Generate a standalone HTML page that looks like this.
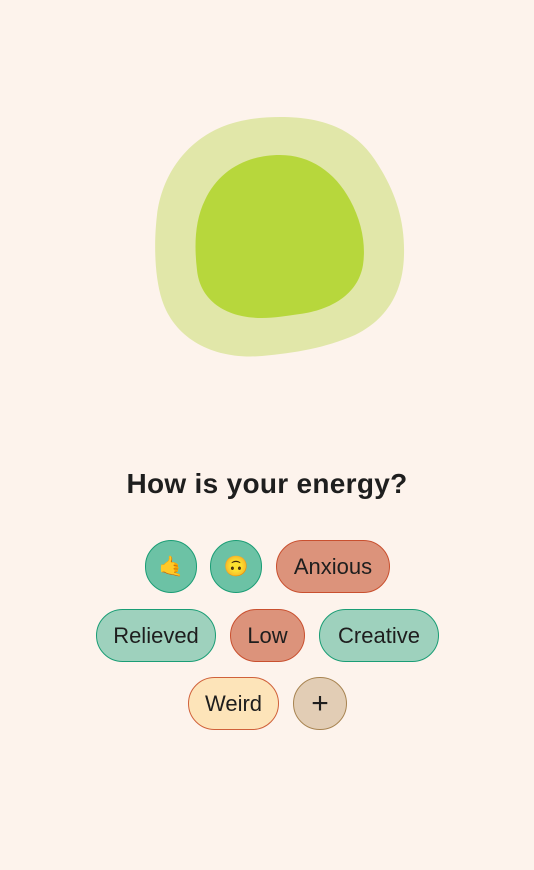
<!DOCTYPE html>
<html><head><meta charset="utf-8"><style>
html,body{margin:0;padding:0;background:#fdf3ec;}
body{width:534px;height:870px;position:relative;overflow:hidden;font-family:"Liberation Sans",sans-serif;}
svg{position:absolute;left:0;top:0}
h1{position:absolute;top:465px;left:0;width:534px;text-align:center;margin:0;font-size:28px;font-weight:bold;color:#1e1e1e;line-height:38px;letter-spacing:0.3px}
.c{position:absolute;box-sizing:border-box;height:53px;border-radius:27px;border:1.5px solid;display:flex;align-items:center;justify-content:center;font-size:22px;color:#1e1e1e}
.g{background:#6cc2a5;border-color:#1a9d75}
.lg{background:#9ed1bd;border-color:#1a9d75}
.r{background:#dc937b;border-color:#c9502f}
.y{background:#fde4b9;border-color:#d0613a}
.p{background:#e2cdb5;border-color:#a88451;font-size:30px}
</style></head><body>
<svg width="534" height="870">
<path fill="#e1e7a9" d="M280,117 C325,117 355,130 375,160 C395,190 405,220 404,255 C403,295 385,320 355,335 C325,348 295,353 262,356 C215,360 175,340 162,300 C154,275 154,240 157,215 C162,175 185,145 215,130 C235,120 258,117 280,117Z"/>
<path fill="#b7d73c" d="M280,155 C310,155 335,172 350,200 C362,222 366,245 363,265 C358,295 330,310 300,314 C285,316 275,318 262,318 C225,318 200,300 197,270 C194,245 195,220 205,200 C218,172 245,155 280,155Z"/>
</svg>
<h1>How is your energy?</h1>
<div class="c g" style="left:145px;top:540px;width:52px;font-size:20px">🤙</div>
<div class="c g" style="left:210px;top:540px;width:52px;font-size:20px">🙃</div>
<div class="c r" style="left:276px;top:540px;width:114px">Anxious</div>
<div class="c lg" style="left:96px;top:609px;width:120px">Relieved</div>
<div class="c r" style="left:230px;top:609px;width:75px">Low</div>
<div class="c lg" style="left:319px;top:609px;width:120px">Creative</div>
<div class="c y" style="left:188px;top:677px;width:91px">Weird</div>
<div class="c p" style="left:293px;top:677px;width:54px">+</div>
</body></html>
